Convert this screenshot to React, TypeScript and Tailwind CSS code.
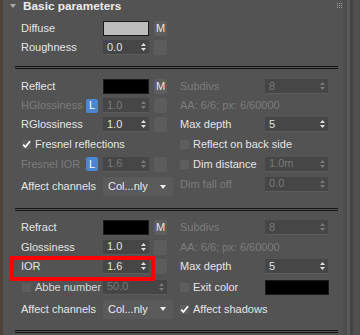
import React from "react";

const Arrows = ({ dim }: { dim?: boolean }) => (
  <svg width="5" height="8" viewBox="0 0 5 8" className="shrink-0">
    <path d="M0 3 L2.5 0 L5 3 Z" fill={dim ? "#7a7a7a" : "#e0e0e0"} />
    <path d="M0 5 L2.5 8 L5 5 Z" fill={dim ? "#7a7a7a" : "#e0e0e0"} />
  </svg>
);

const Spinner = ({ value, w = "w-[46px]", dim }: { value: string; w?: string; dim?: boolean }) => (
  <div className={`${w} h-[15px] bg-[#464646] border-b border-[#5c5c5c] flex items-center justify-between pl-[4px] pr-[3px] shrink-0`}>
    <span className={dim ? "text-[#7a7a7a]" : "text-[#e2e2e2]"}>{value}</span>
    <Arrows dim={dim} />
  </div>
);

const Square = () => <div className="w-[13px] h-[15px] rounded-[2px] bg-[#5c5c5c] shrink-0" />;

const MBtn = () => (
  <div className="w-[13px] h-[15px] rounded-[2px] bg-[#5e5e5e] flex items-center justify-center text-[#e6e6e6] text-[11px] shrink-0">M</div>
);

const LBtn = () => (
  <div className="w-[12px] h-[14px] rounded-[2px] bg-[#4c86cf] flex items-center justify-center text-white text-[11px] shrink-0 mr-[5px]">L</div>
);

const Swatch = ({ color, w = "w-[46px]" }: { color: string; w?: string }) => (
  <div className={`${w} h-[15px] border border-[#1a1a1a] shrink-0 ${color}`} />
);

const Check = ({ checked }: { checked?: boolean }) => (
  <div className="w-[9px] h-[9px] bg-[#5e5e5e] shrink-0 flex items-center justify-center">
    {checked && (
      <svg width="9" height="9" viewBox="0 0 9 9">
        <path d="M1.2 4.6 L3.4 7 L8 1.2" stroke="#ffffff" strokeWidth="1.7" fill="none" />
      </svg>
    )}
  </div>
);

const Dropdown = () => (
  <div className="w-[70px] h-[19px] rounded-[2px] bg-[#5a5a5a] flex items-center justify-between pl-[5px] pr-[7px] shrink-0 text-[#eaeaea]">
    <span>Col...nly</span>
    <svg width="6" height="4" viewBox="0 0 6 4">
      <path d="M0 0 L6 0 L3 4 Z" fill="#f0f0f0" />
    </svg>
  </div>
);

const Lbl = ({ children, dim, w = "w-[82px]" }: { children: React.ReactNode; dim?: boolean; w?: string }) => (
  <span className={`${w} shrink-0 whitespace-nowrap ${dim ? "text-[#7c7c7c]" : "text-[#e4e4e4]"}`}>{children}</span>
);

const RLbl = ({ children, dim }: { children: React.ReactNode; dim?: boolean }) => (
  <span className={`w-[85px] shrink-0 whitespace-nowrap ${dim ? "text-[#7c7c7c]" : "text-[#e4e4e4]"}`}>{children}</span>
);

const Row = ({ h, left, right }: { h: string; left: React.ReactNode; right?: React.ReactNode }) => (
  <div className={`${h} flex items-center pl-[18px]`}>
    <div className="w-[159px] flex items-center shrink-0">{left}</div>
    <div className="flex items-center">{right}</div>
  </div>
);

const Sep = ({ mt }: { mt: string }) => (
  <div className={`${mt} ml-[12px] w-[323px] h-[3px] border-y border-[#141414]`} />
);

const Gap5 = () => <div className="w-[5px] shrink-0" />;

export default function App() {
  return (
    <div className="w-[360px] h-[335px] bg-[#535353] flex overflow-hidden font-['Liberation_Sans',Arial,sans-serif] text-[11px] leading-none">
      <div className="w-[3px] shrink-0 bg-[#4f4338]" />
      <div className="w-[340px] shrink-0 relative">
        <div className="absolute top-[3px] right-[1px] grid grid-cols-3 gap-[1px]">
          {Array.from({ length: 9 }).map((_, i) => (
            <div key={i} className="w-[1px] h-[1px] bg-[#9a9a9a]" />
          ))}
        </div>
        {/* header */}
        <div className="h-[15px] flex items-center pl-[7px]">
          <svg width="6" height="4" viewBox="0 0 6 4" className="mr-[7px] -mt-[3px]">
            <path d="M0 0 L6 0 L3 4 Z" fill="#a8a8a8" />
          </svg>
          <span className="font-bold text-[11.8px] text-[#ececec] -mt-[2px]">Basic parameters</span>
        </div>
        {/* group 1 */}
        <div className="pt-[4px]">
          <Row h="h-[19px]" left={<><Lbl>Diffuse</Lbl><Swatch color="bg-[#bdbdbd]" /><Gap5 /><MBtn /></>} />
          <Row h="h-[19px]" left={<><Lbl>Roughness</Lbl><Spinner value="0.0" /><Gap5 /><Square /></>} />
        </div>
        <Sep mt="mt-[9px]" />
        {/* group 2 */}
        <div className="pt-[8px]">
          <Row
            h="h-[19px]"
            left={<><Lbl>Reflect</Lbl><Swatch color="bg-black" /><Gap5 /><MBtn /></>}
            right={<><RLbl dim>Subdivs</RLbl><Spinner value="8" w="w-[63px]" dim /></>}
          />
          <Row
            h="h-[19px]"
            left={<><Lbl dim w="w-[65px]">HGlossiness</Lbl><LBtn /><Spinner value="1.0" dim /><Gap5 /><Square /></>}
            right={<span className="text-[#7c7c7c] whitespace-nowrap">AA: 6/6; px: 6/60000</span>}
          />
          <Row
            h="h-[19px]"
            left={<><Lbl>RGlossiness</Lbl><Spinner value="1.0" /><Gap5 /><Square /></>}
            right={<><RLbl>Max depth</RLbl><Spinner value="5" w="w-[63px]" /></>}
          />
          <Row
            h="h-[20px]"
            left={<div className="flex items-center pl-[1px]"><Check checked /><span className="ml-[4px] text-[#e4e4e4] whitespace-nowrap">Fresnel reflections</span></div>}
            right={<><Check /><span className="ml-[4px] text-[#e4e4e4] whitespace-nowrap">Reflect on back side</span></>}
          />
          <Row
            h="h-[20px]"
            left={<><Lbl dim w="w-[65px]">Fresnel IOR</Lbl><LBtn /><Spinner value="1.6" dim /><Gap5 /><Square /></>}
            right={<><Check /><span className="ml-[4px] w-[72px] text-[#e4e4e4] whitespace-nowrap">Dim distance</span><Spinner value="1.0m" w="w-[63px]" dim /></>}
          />
          <Row
            h="h-[25px]"
            left={<><Lbl>Affect channels</Lbl><Dropdown /></>}
            right={<div className="flex items-center mb-[5px]"><RLbl dim>Dim fall off</RLbl><Spinner value="0.0" w="w-[63px]" dim /></div>}
          />
        </div>
        <Sep mt="mt-[9px]" />
        {/* group 3 */}
        <div className="pt-[7px] relative">
          <Row
            h="h-[19px]"
            left={<><Lbl>Refract</Lbl><Swatch color="bg-black" /><Gap5 /><MBtn /></>}
            right={<><RLbl dim>Subdivs</RLbl><Spinner value="8" w="w-[63px]" dim /></>}
          />
          <Row
            h="h-[20px]"
            left={<><Lbl>Glossiness</Lbl><Spinner value="1.0" /><Gap5 /><Square /></>}
            right={<span className="text-[#7c7c7c] whitespace-nowrap">AA: 6/6; px: 6/60000</span>}
          />
          <Row
            h="h-[19px]"
            left={<><Lbl>IOR</Lbl><Spinner value="1.6" /><Gap5 /><Square /></>}
            right={<><RLbl>Max depth</RLbl><Spinner value="5" w="w-[63px]" /></>}
          />
          <Row
            h="h-[22px]"
            left={<div className="flex items-center pl-[1px]"><Check /><span className="ml-[4px] w-[68px] text-[#d8d8d8] whitespace-nowrap">Abbe number</span><Spinner value="50.0" w="w-[64px]" dim /></div>}
            right={<><Check /><span className="ml-[4px] w-[72px] text-[#e4e4e4] whitespace-nowrap">Exit color</span><Swatch color="bg-black" w="w-[64px]" /></>}
          />
          <Row
            h="h-[22px]"
            left={<><Lbl>Affect channels</Lbl><Dropdown /></>}
            right={<><Check checked /><span className="ml-[4px] text-[#e4e4e4] whitespace-nowrap">Affect shadows</span></>}
          />
          <div className="absolute left-[7px] top-[45px] w-[145px] h-[25px] border-[4px] border-[#ff0000]" />
        </div>
        <Sep mt="mt-[10px]" />
      </div>
      {/* scrollbar area */}
      <div className="w-[17px] shrink-0 flex">
        <div className="w-[4px] bg-[#4d4d4d]" />
        <div className="w-[3px] bg-[#5b5b5b]" />
        <div className="w-[3px] bg-[#434343]" />
        <div className="flex-1 bg-[#4f4f4f]" />
      </div>
    </div>
  );
}
